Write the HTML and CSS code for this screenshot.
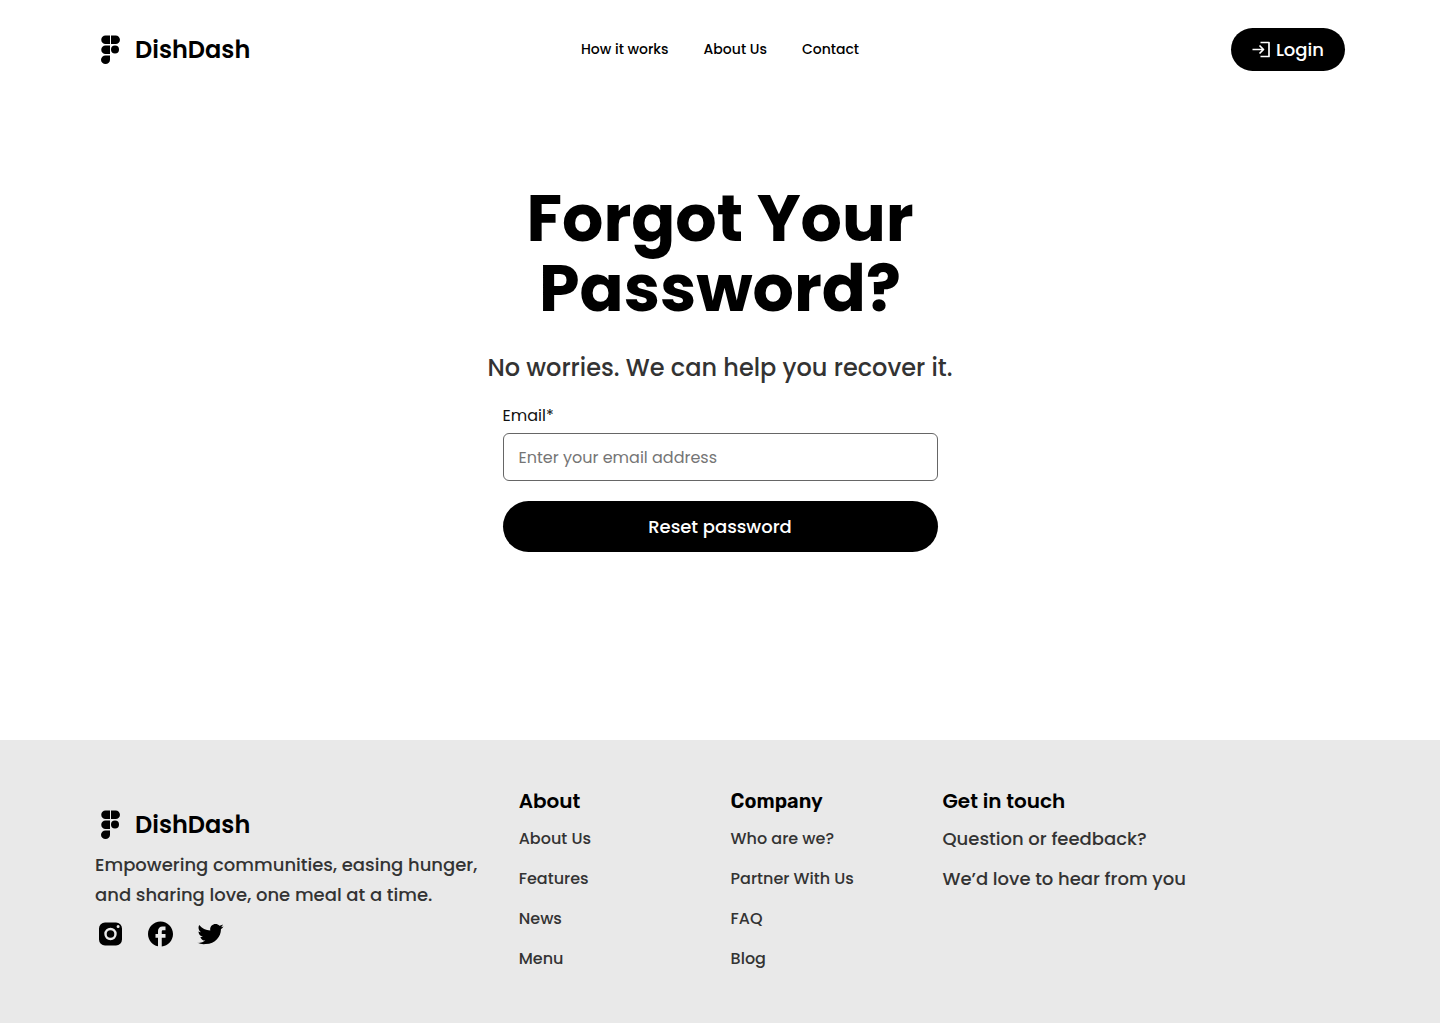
FILE: index.html
```html
<!DOCTYPE html>
<html lang="en">
<head>
<meta charset="utf-8">
<meta name="viewport" content="width=device-width, initial-scale=1">
<title>DishDash – Forgot Your Password?</title>
<link rel="stylesheet" href="styles.css">
</head>
<body>
<svg width="0" height="0" class="sprite" aria-hidden="true">
  <symbol id="mark" viewBox="0 0 20 30">
    <path d="M4.500 .5h4.500v8.500H4.500A4.250 4.250 0 0 1 4.500 .5zM10 .5h4.700a4.250 4.250 0 0 1 0 8.500H10zM4.500 10.500h4.500V19H4.500a4.250 4.250 0 0 1 0-8.500zM4.500 20.500h4.500v4.250A4.500 4.300 0 1 1 4.500 20.500z"/>
    <circle cx="14" cy="14.500" r="4"/>
  </symbol>
</svg>
<header class="header">
  <a class="brand" href="#"><svg class="mark"><use href="#mark"/></svg>DishDash</a>
  <nav class="nav">
    <a href="#">How it works</a>
    <a href="#">About Us</a>
    <a href="#">Contact</a>
  </nav>
  <button class="button login" type="button">
    <svg class="login-icon" viewBox="0 0 20 20"><path d="M.5 9.500h11M7.500 5.500l4 4-4 4M8.500 2.500H17v14H8.500"/></svg>Login
  </button>
</header>
<main class="main">
  <h1 class="title">Forgot Your<br>Password?</h1>
  <p class="lead">No worries. We can help you recover it.</p>
  <form class="form">
    <label class="label" for="email">Email*</label>
    <input class="input" id="email" type="email" placeholder="Enter your email address">
    <button class="button submit" type="submit">Reset password</button>
  </form>
</main>
<footer class="footer">
  <div class="about">
    <a class="brand" href="#"><svg class="mark"><use href="#mark"/></svg>DishDash</a>
    <p class="tagline">Empowering communities, easing hunger,<br>and sharing love, one meal at a time.</p>
    <div class="social">
      <a href="#" aria-label="Instagram"><svg viewBox="0 0 30 30"><path fill-rule="evenodd" d="M10 3.500h11a6 6 0 0 1 6 6v11a6 6 0 0 1-6 6h-11a6 6 0 0 1-6-6v-11a6 6 0 0 1 6-6zM15.500 8.800a6.200 6.200 0 1 0 0 12.400 6.200 6.200 0 0 0 0-12.400zm0 2.400a3.800 3.800 0 1 1 0 7.600 3.800 3.800 0 0 1 0-7.600zM23.100 5.900a1.500 1.500 0 1 0 0 3 1.500 1.500 0 0 0 0-3z"/></svg></a>
      <a href="#" aria-label="Facebook"><svg viewBox="0 0 30 30"><path transform="translate(.5)" d="M27.500 15.060C27.500 8.120 21.900 2.500 15 2.500S2.500 8.120 2.500 15.060c0 6.090 4.300 11.160 10 12.310v-8.540H10v-3.770h2.500v-3.140c0-2.430 1.960-4.400 4.380-4.400H20v3.770h-2.500c-.69 0-1.250.57-1.250 1.260v2.510H20v3.770h-3.750v8.730c6.310-.630 11.250-5.970 11.250-12.500z"/></svg></a>
      <a href="#" aria-label="Twitter"><svg viewBox="0 0 30 30"><path transform="translate(.5)" d="M28.080 7.500c-.97.440-2 .72-3.080.86 1.100-.66 1.950-1.710 2.350-2.960-1.040.62-2.190 1.060-3.400 1.310C22.960 5.620 21.560 5 20 5c-2.940 0-5.340 2.400-5.340 5.360 0 .43.050.84.140 1.230-4.450-.23-8.410-2.360-11.050-5.600-.46.790-.72 1.710-.72 2.690 0 1.860.93 3.510 2.380 4.450-.89 0-1.710-.25-2.440-.62v.04c0 2.600 1.850 4.780 4.300 5.260a5.300 5.300 0 0 1-2.410.09 5.350 5.350 0 0 0 5 3.720A10.700 10.700 0 0 1 3.210 23.900c-.42 0-.85-.03-1.270-.08A15.200 15.200 0 0 0 10.150 25c9.850 0 15.260-8.170 15.260-14.050 0-.240 0-.460-.010-.700 1.050-.75 1.950-1.700 2.680-2.750z"/></svg></a>
    </div>
  </div>
  <nav class="column">
    <h2 class="heading">About</h2>
    <a href="#">About Us</a>
    <a href="#">Features</a>
    <a href="#">News</a>
    <a href="#">Menu</a>
  </nav>
  <nav class="column">
    <h2 class="heading heading-rubik">Company</h2>
    <a href="#">Who are we?</a>
    <a href="#">Partner With Us</a>
    <a href="#">FAQ</a>
    <a href="#">Blog</a>
  </nav>
  <div class="column">
    <h2 class="heading">Get in touch</h2>
    <p class="contact">Question or feedback?</p>
    <p class="contact">We’d love to hear from you</p>
  </div>
</footer>
</body>
</html>
```

FILE: styles.css
```css
* { box-sizing: border-box; margin: 0; }

body {
  min-height: 100vh;
  display: flex;
  flex-direction: column;
  font-family: Poppins, Inter, sans-serif;
  font-size: 16px;
  line-height: 24px;
  color: #000;
  background: #fff;
}

a { color: inherit; text-decoration: none; }
button, input { font: inherit; }
.sprite { display: none; }

.header {
  display: grid;
  grid-template-columns: 1fr auto 1fr;
  align-items: center;
  padding: 28px 95px;
}

.brand {
  display: flex;
  align-items: center;
  gap: 14px;
  padding-left: 6px;
  font-size: 24px;
  font-weight: 600;
  line-height: 36px;
}
.mark { width: 20px; height: 30px; }

.nav {
  display: flex;
  gap: 35px;
  font-size: 14px;
  font-weight: 500;
  line-height: 21px;
}

.button {
  display: flex;
  align-items: center;
  justify-content: center;
  border: 0;
  border-radius: 26px;
  background: #000;
  color: #fff;
  font-size: 18px;
  font-weight: 500;
  line-height: 27px;
}
.login { justify-self: end; gap: 4px; padding: 8px 21px; }
.login-icon {
  width: 20px;
  height: 20px;
  fill: none;
  stroke: #fff;
  stroke-width: 1.7;
  stroke-linejoin: round;
}

.main {
  flex: 1;
  display: flex;
  flex-direction: column;
  align-items: center;
  padding: 85px 24px 188px;
}
.title {
  text-align: center;
  font-size: 65px;
  font-weight: 700;
  line-height: 70px;
}
.lead {
  margin-top: 26px;
  font-size: 24px;
  font-weight: 500;
  line-height: 36px;
  color: #333;
}
.form {
  display: flex;
  flex-direction: column;
  width: 100%;
  max-width: 435px;
  margin-top: 18px;
}
.label { margin-bottom: 5px; color: #111; }
.input {
  height: 48px;
  padding: 0 15px;
  border: 1px solid #666;
  border-radius: 6px;
  color: #111;
  background: #fff;
}
.input::placeholder { color: #757575; opacity: 1; }
.submit { margin-top: 20px; padding: 12px; }

.footer {
  display: grid;
  grid-template-columns: 20fr 10fr 10fr 19fr;
  padding: 46px 95px 52px;
  background: #e9e9e9;
}
.about { padding-top: 21px; }
.tagline {
  margin-top: 7px;
  font-size: 18px;
  font-weight: 500;
  line-height: 30px;
  color: #333;
}
.social { display: flex; gap: 20px; margin-top: 9px; }
.social svg { display: block; width: 30px; height: 30px; }

.column {
  display: flex;
  flex-direction: column;
  align-items: flex-start;
  gap: 16px;
  font-weight: 500;
  color: #333;
}
.heading {
  margin-bottom: -5px;
  font-size: 20px;
  font-weight: 600;
  line-height: 30px;
  color: #000;
}
.heading-rubik { font-family: Rubik, Roboto, sans-serif; }
.contact { font-size: 18px; }
```
